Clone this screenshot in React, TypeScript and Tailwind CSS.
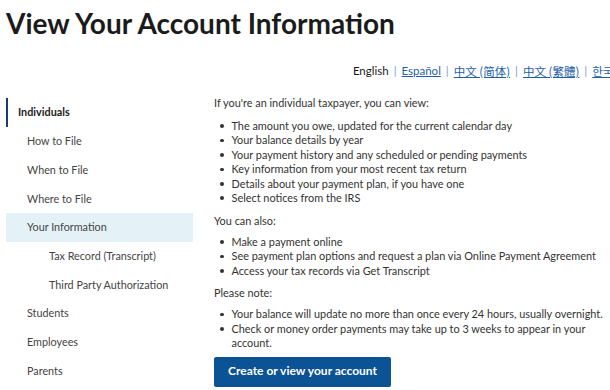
import React from "react";

const navItems = [
  { label: "How to File", level: 1 },
  { label: "When to File", level: 1 },
  { label: "Where to File", level: 1 },
  { label: "Your Information", level: 1, active: true },
  { label: "Tax Record (Transcript)", level: 2 },
  { label: "Third Party Authorization", level: 2 },
  { label: "Students", level: 1 },
  { label: "Employees", level: 1 },
  { label: "Parents", level: 1 },
];

const canView = [
  "The amount you owe, updated for the current calendar day",
  "Your balance details by year",
  "Your payment history and any scheduled or pending payments",
  "Key information from your most recent tax return",
  "Details about your payment plan, if you have one",
  "Select notices from the IRS",
];

const canAlso = [
  "Make a payment online",
  "See payment plan options and request a plan via Online Payment Agreement",
  "Access your tax records via Get Transcript",
];

const notes = [
  "Your balance will update no more than once every 24 hours, usually overnight.",
  "Check or money order payments may take up to 3 weeks to appear in your account.",
];

function BulletList({ items, last }: { items: string[]; last?: boolean }) {
  return (
    <ul className={"mt-[6.5px] flex flex-col " + (last ? "mb-[6px]" : "mb-[8.5px]")}>
      {items.map((t) => (
        <li key={t} className="flex gap-[8px] pl-[6px] leading-[14.4px]">
          <span className="mt-[5.5px] h-[3.5px] w-[3.5px] shrink-0 rounded-full bg-[#333]" />
          <span>{t}</span>
        </li>
      ))}
    </ul>
  );
}

export default function App() {
  return (
    <div className="h-[390px] w-[610px] overflow-hidden bg-white font-['Lato','Open_Sans',sans-serif] text-[#333]">
      <h1 className="pl-[6px] pt-[5px] text-[28px] font-bold leading-[36px] text-[#1b1b1b]">
        View Your Account Information
      </h1>

      <div className="mr-[-14px] mt-[22px] flex items-center justify-end gap-[5px] whitespace-nowrap text-[11.5px] leading-[16px]">
        <span className="text-[#1b1b1b]">English</span>
        <span className="text-[#7a9cc6]">|</span>
        <span className="text-[#1f5fa8] underline">Español</span>
        <span className="text-[#7a9cc6]">|</span>
        <span className="font-['Noto_Sans_CJK_SC',sans-serif] text-[#1f5fa8] underline">中文 (简体)</span>
        <span className="text-[#7a9cc6]">|</span>
        <span className="font-['Noto_Sans_CJK_TC',sans-serif] text-[#1f5fa8] underline">中文 (繁體)</span>
        <span className="text-[#7a9cc6]">|</span>
        <span className="font-['Noto_Sans_CJK_KR',sans-serif] text-[#1f5fa8] underline">한국어</span>
      </div>

      <div className="mt-[13px] flex">
        <nav className="ml-[6px] mt-[6px] w-[187px] shrink-0 text-[10.8px] text-[#444]">
          <div className="flex h-[29px] items-center border-l-[2px] border-[#1a3d6e] pl-[10px] font-bold text-[#1b1b1b]">
            Individuals
          </div>
          {navItems.map((n) => (
            <div
              key={n.label}
              className={
                "flex h-[28.7px] items-center " +
                (n.level === 2 ? "pl-[43px] " : "pl-[21px] ") +
                (n.active ? "bg-[#e4f2f8]" : "")
              }
            >
              {n.label}
            </div>
          ))}
        </nav>

        <main className="ml-[21px] flex-1 pt-[4px] text-[10.9px] leading-[14.4px] text-[#333]">
          <p>If you're an individual taxpayer, you can view:</p>
          <div className="pt-[2px]" />
          <BulletList items={canView} />
          <p>You can also:</p>
          <BulletList items={canAlso} />
          <p>Please note:</p>
          <BulletList items={notes} last />
          <button className="h-[30px] rounded-[2px] bg-[#0b5395] px-[14px] text-[12px] font-bold text-white">
            Create or view your account
          </button>
        </main>
      </div>
    </div>
  );
}
